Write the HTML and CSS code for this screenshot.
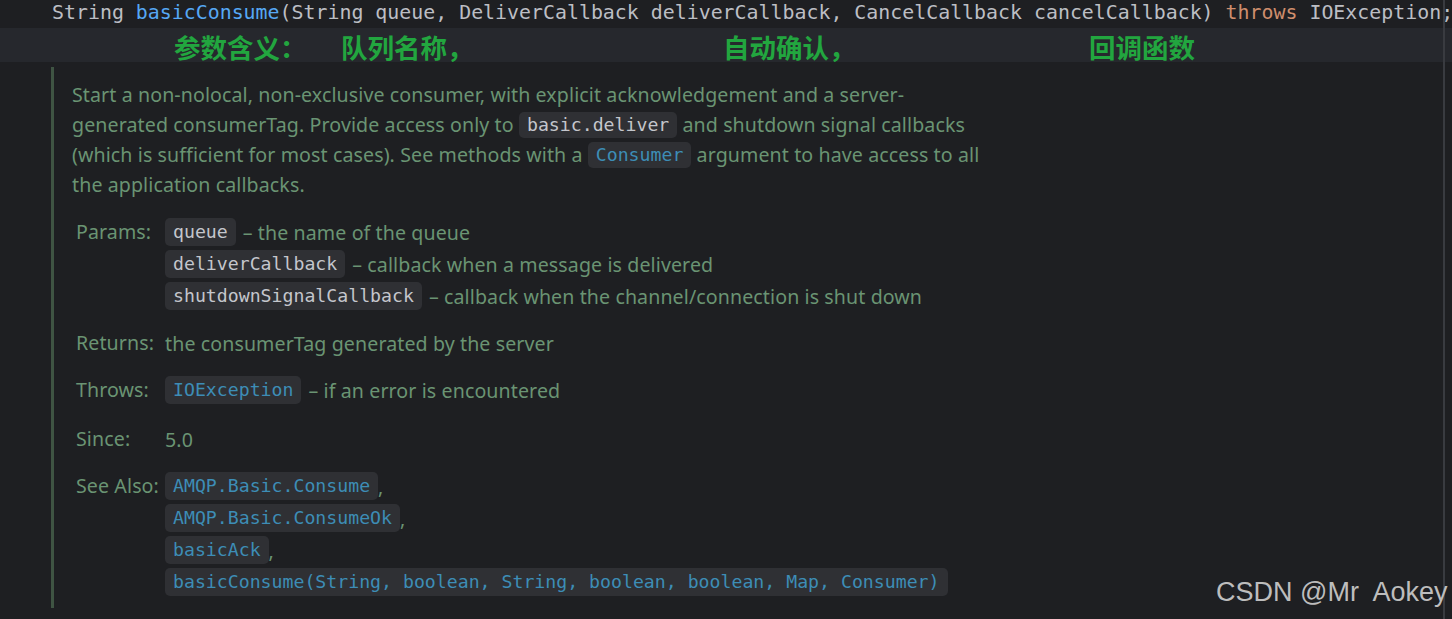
FILE: index.html
```html
<!DOCTYPE html>

<html>
    <head>
        <link rel="stylesheet" href="styles.css">
    </head>

    <body>
        <div class="editor">
            <div class="code">String <span class="method">basicConsume</span>(String queue, DeliverCallback deliverCallback, CancelCallback cancelCallback) <span class="kw">throws</span> IOException;</div>

            <div class="comment">
                <span class="c1">参数含义：</span><span class="c2">队列名称，</span><span class="c3">自动确认，</span><span>回调函数</span>
            </div>

            <div class="doc">
                <p class="desc">
                    Start a non-nolocal, non-exclusive consumer, with explicit acknowledgement and a server-<br>
                    generated consumerTag. Provide access only to <code class="chip">basic.deliver</code> and shutdown signal callbacks<br>
                    (which is sufficient for most cases). See methods with a <code class="chip link">Consumer</code> argument to have access to all<br>
                    the application callbacks.
                </p>

                <div class="section">
                    <div class="label">Params:</div>
                    <div class="values">
                        <div class="item"><code class="chip">queue</code><span class="dash">– the name of the queue</span></div>
                        <div class="item"><code class="chip">deliverCallback</code><span class="dash">– callback when a message is delivered</span></div>
                        <div class="item"><code class="chip">shutdownSignalCallback</code><span class="dash">– callback when the channel/connection is shut down</span></div>
                    </div>
                </div>

                <div class="section">
                    <div class="label">Returns:</div>
                    <div class="values">
                        <div class="item">the consumerTag generated by the server</div>
                    </div>
                </div>

                <div class="section">
                    <div class="label">Throws:</div>
                    <div class="values">
                        <div class="item"><code class="chip link">IOException</code><span class="dash">– if an error is encountered</span></div>
                    </div>
                </div>

                <div class="section since">
                    <div class="label">Since:</div>
                    <div class="values">
                        <div class="item">5.0</div>
                    </div>
                </div>

                <div class="section">
                    <div class="label">See Also:</div>
                    <div class="values">
                        <div class="item"><code class="chip link">AMQP.Basic.Consume</code>,</div>
                        <div class="item"><code class="chip link">AMQP.Basic.ConsumeOk</code>,</div>
                        <div class="item"><code class="chip link">basicAck</code>,</div>
                        <div class="item"><code class="chip link">basicConsume(String, boolean, String, boolean, boolean, Map, Consumer)</code></div>
                    </div>
                </div>
            </div>

            <div class="scrollline"></div>
            <div class="watermark">CSDN @Mr&nbsp; Aokey</div>
        </div>
    </body>
</html>
```

FILE: styles.css
```css
body
{
    margin: 0;
    background-color: #1e1f22;
}

.editor
{
    position: relative;
    width: 1452px;
    height: 619px;
    overflow: hidden;
}

.code
{
    height: 28px;
    line-height: 26px;
    padding-left: 52px;
    font-family: "DejaVu Sans Mono", "Liberation Mono", monospace;
    font-size: 19.9px;
    color: #bcbec4;
    white-space: nowrap;
}

.method
{
    color: #56a8f5;
}

.kw
{
    color: #cf8e6d;
}

.comment
{
    height: 34px;
    line-height: 38px;
    padding-left: 174px;
    background-color: #26282d;
    font-family: "Noto Sans CJK SC", sans-serif;
    font-size: 26.5px;
    font-weight: bold;
    color: #22a63f;
    white-space: nowrap;
}

.comment span
{
    display: inline-block;
}

.c1
{
    width: 167px;
}

.c2
{
    width: 382px;
}

.c3
{
    width: 366px;
}

.doc
{
    margin-top: 5px;
    margin-left: 51px;
    width: 1000px;
    padding: 13px 0 10px 18px;
    border-left: 3px solid #3f5443;
    font-family: "Noto Sans", "Open Sans", sans-serif;
    font-size: 19.6px;
    letter-spacing: 0.1px;
    color: #6a9473;
}

.desc
{
    margin: 0 0 16px 0;
    line-height: 30px;
    white-space: nowrap;
}

.chip
{
    display: inline-block;
    height: 28px;
    line-height: 28px;
    padding: 0 8px;
    border-radius: 5px;
    background-color: #2f3034;
    font-family: "DejaVu Sans Mono", "Liberation Mono", monospace;
    font-size: 18.2px;
    letter-spacing: 0;
    color: #c4c6cc;
    vertical-align: middle;
}

.desc .chip
{
    height: 26px;
    line-height: 26px;
    vertical-align: 1px;
}

.link
{
    color: #3d8db6;
}

.section
{
    display: flex;
    margin-bottom: 15px;
}

.section:last-child
{
    margin-bottom: 0;
}

.since
{
    margin-top: 17px;
}

.label
{
    width: 89px;
    padding-left: 4px;
    line-height: 32px;
}

.values
{
    display: flex;
    flex-direction: column;
}

.item
{
    display: flex;
    align-items: center;
    height: 32px;
    white-space: nowrap;
}

.dash
{
    margin-left: 7px;
}

.scrollline
{
    position: absolute;
    top: 0;
    left: 1443px;
    width: 2px;
    height: 619px;
    background-color: #393b40;
}

.watermark
{
    position: absolute;
    left: 1216px;
    top: 577px;
    font-family: "Liberation Sans", Arial, sans-serif;
    font-size: 27px;
    color: #bdbdbd;
    white-space: nowrap;
}
```
